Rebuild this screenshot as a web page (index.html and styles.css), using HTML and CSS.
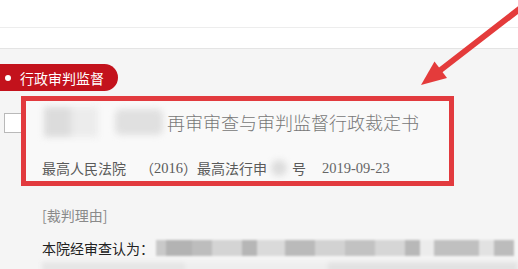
FILE: index.html
```html
<!DOCTYPE html>
<html lang="zh-CN">
  <head>
    <meta charset="UTF-8" />
    <meta name="viewport" content="width=device-width, initial-scale=1.0" />
    <title>裁判文书</title>
    <link rel="stylesheet" href="styles.css">
  </head>
  <body>
    <div class="top-bar"></div>
    <div class="sub-bar"></div>

    <div class="list">
      <div class="tag"><span class="tag-dot"></span>行政审判监督</div>

      <div class="item">
        <div class="check"></div>
        <div class="doc">
          <div class="doc-title">
            <span class="blur blur-a"></span>
            <span class="blur blur-b"></span>
            <span class="title-text">再审审查与审判监督行政裁定书</span>
          </div>
          <div class="doc-meta">
            <span>最高人民法院</span>
            <span class="case-no">（<span class="num">2016</span>）最高法行申<span class="blur blur-dot"></span>号</span>
            <span class="num date">2019-09-23</span>
          </div>
        </div>
      </div>

      <div class="reason-label">[裁判理由]</div>
      <div class="reason">
        <span>本院经审查认为：</span>
        <span class="mosaic">
          <i style="width:10px;background:#c9c9c9"></i>
          <i style="width:26px;background:#b3b3b3"></i>
          <i style="width:20px;background:#bdbdbd"></i>
          <i style="width:30px;background:#d4d4d4"></i>
          <i style="width:15px;background:#b6b6b6"></i>
          <i style="width:28px;background:#dadada"></i>
          <i style="width:30px;background:#bababa"></i>
          <i style="width:30px;background:#d2d2d2"></i>
          <i style="width:30px;background:#c2c2c2"></i>
          <i style="width:30px;background:#d6d6d6"></i>
          <i style="width:15px;background:#b8b8b8"></i>
          <i style="width:14px;background:#ececec"></i>
          <i style="width:45px;background:#c0c0c0"></i>
          <i style="width:15px;background:#e2e2e2"></i>
          <i style="width:20px;background:#bcbcbc"></i>
        </span>
      </div>
      <div class="mosaic-row"></div>
    </div>

    <svg class="arrow" width="518" height="269" viewBox="0 0 518 269">
      <line x1="522" y1="7" x2="438" y2="72" stroke="#e43b3b" stroke-width="6" stroke-linecap="round" />
      <polygon points="421,85 434.5,61.5 447,78" fill="#e43b3b" />
    </svg>
  </body>
</html>
```

FILE: styles.css
```css
body {
  margin: 0;
  background: #f5f5f5;
  font-family: "Noto Sans CJK SC", "Liberation Sans", sans-serif;
  font-size: 14px;
  color: #555;
  overflow: hidden;
  position: relative;
  height: 269px;
}

.top-bar {
  height: 27px;
  background: #fff;
  border-bottom: 1px solid #ededed;
}

.sub-bar {
  height: 20px;
  background: #fff;
  border-bottom: 1px solid #e4e4e4;
}

.list {
  padding-top: 15px;
}

.tag {
  display: flex;
  align-items: center;
  width: 118px;
  height: 27px;
  box-sizing: border-box;
  padding-left: 5px;
  background: #c3121c;
  color: #fff;
  border-radius: 0 14px 14px 0;
  font-size: 14px;
}

.tag-dot {
  width: 6px;
  height: 6px;
  border-radius: 50%;
  background: #fff;
  margin-right: 9px;
}

.item {
  display: flex;
  margin-top: 5px;
  padding-left: 4px;
}

.check {
  width: 17px;
  height: 20px;
  margin-top: 17px;
  box-sizing: border-box;
  border: 1px solid #b9b9b9;
  border-right: none;
  background: #fff;
}

.doc {
  width: 433px;
  height: 90px;
  box-sizing: border-box;
  border: 5px solid #e23a3e;
  background: #f9f9f9;
  padding: 6px 0 0 16px;
}

.doc-title {
  display: flex;
  align-items: center;
  height: 30px;
}

.blur {
  display: inline-block;
  filter: blur(3px);
}

.blur-a {
  width: 54px;
  height: 30px;
  background: linear-gradient(90deg, #dcdcdc 0 45%, #ececec 55% 100%);
  margin-left: 2px;
}

.blur-b {
  width: 48px;
  height: 26px;
  background: #e0e0e0;
  border-radius: 6px;
  margin-left: 17px;
}

.title-text {
  margin-left: 4px;
  font-size: 18px;
  font-weight: 300;
  color: #777;
}

.doc-meta {
  display: flex;
  align-items: center;
  height: 20px;
  margin-top: 21px;
  color: #5a5a5a;
}

.case-no {
  display: flex;
  align-items: center;
  margin-left: 14px;
}

.num {
  font-family: "Liberation Serif", serif;
  font-size: 14.5px;
}

.blur-dot {
  width: 16px;
  height: 16px;
  border-radius: 50%;
  background: #dcdcdc;
  margin: 0 5px 0 4px;
}

.date {
  margin-left: 16px;
  color: #666;
}

.reason-label {
  margin: 19px 0 0 42px;
  line-height: 20px;
  color: #8a8a8a;
}

.reason {
  display: flex;
  align-items: center;
  margin: 13px 0 0 42px;
  line-height: 20px;
  color: #222;
  white-space: nowrap;
}

.mosaic {
  display: flex;
  height: 16px;
  margin-left: 2px;
  filter: blur(1px);
}

.mosaic i {
  display: block;
  height: 16px;
}

.mosaic-row {
  height: 14px;
  margin: 4px 0 0 42px;
  background: linear-gradient(90deg, #e6e6e6 0 30%, #eeeeee 30% 60%, #e2e2e2 60% 100%);
  filter: blur(2px);
}

.arrow {
  position: absolute;
  top: 0;
  left: 0;
  pointer-events: none;
}
```
